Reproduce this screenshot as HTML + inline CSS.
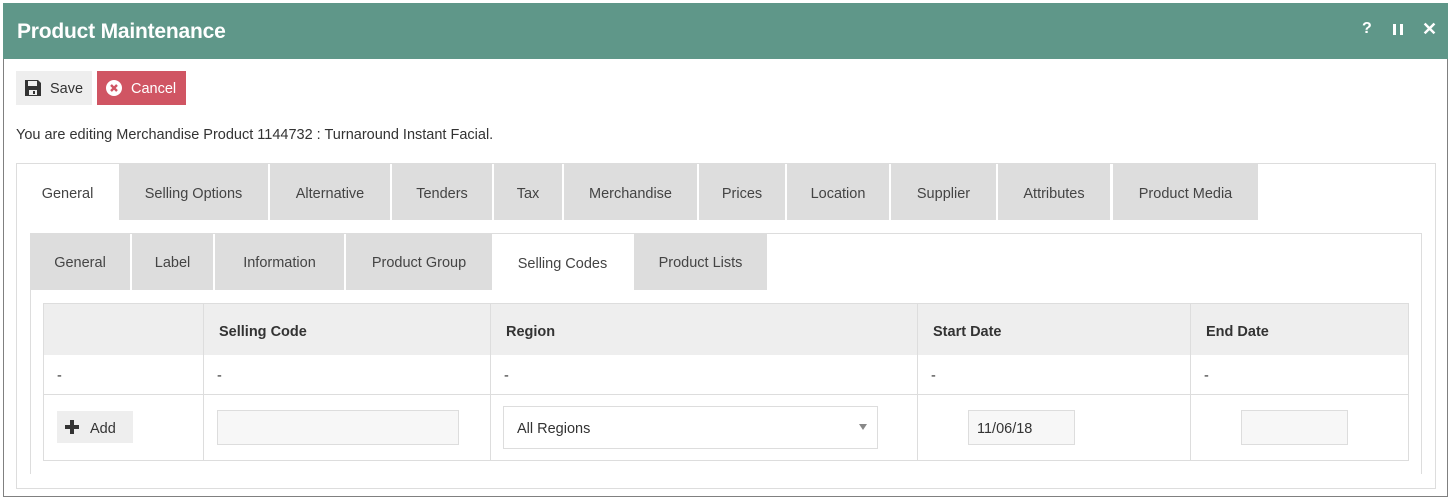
<!DOCTYPE html>
<html><head><meta charset="utf-8"><style>
*{box-sizing:border-box;margin:0;padding:0}
body{width:1452px;height:501px;background:#fff;font-family:"Liberation Sans",sans-serif;font-size:14.5px;color:#333;position:relative;overflow:hidden}
.a{position:absolute}
.t{transform:translateY(2px)}
.tab{position:absolute;background:#dddddd;display:flex;align-items:center;justify-content:center;color:#444;padding-top:3px}
.tab.on{background:#fff}
.bl{background:#ddd}
.inp{position:absolute;background:#f7f7f7;border:1px solid #ddd}
</style></head><body>
<div class="a" style="left:3px;top:3px;width:1445px;height:494px;border:1px solid #808080;border-top:none"></div>
<div class="a" style="left:3px;top:3px;width:1445px;height:56px;background:#5f9789"></div>
<div class="a" style="left:17px;top:20px;color:#fff;font-size:21px;font-weight:bold;letter-spacing:-0.2px">Product Maintenance</div>
<div class="a" style="left:1362px;top:20px;color:#fff;font-weight:bold;font-size:16px">?</div>
<div class="a" style="left:1393px;top:24px;width:3px;height:11px;background:#fff"></div>
<div class="a" style="left:1400px;top:24px;width:3px;height:11px;background:#fff"></div>
<div class="a" style="left:1422px;top:19px;color:#fff;font-weight:bold;font-size:18px">✕</div>

<div class="a" style="left:16px;top:71px;width:76px;height:34px;background:#eee"></div>
<svg class="a" style="left:24px;top:79px" width="18" height="18" viewBox="0 0 18 18"><path d="M1 1h13l3 3v13H1z" fill="#333"/><rect x="4" y="2" width="9" height="5" fill="#eee"/><rect x="5" y="11" width="8" height="5" fill="#eee"/><rect x="9" y="12" width="2" height="3" fill="#333"/></svg>
<div class="a t" style="left:50px;top:79px">Save</div>
<div class="a" style="left:97px;top:71px;width:89px;height:34px;background:#d05563"></div>
<svg class="a" style="left:105px;top:79px" width="18" height="18" viewBox="0 0 18 18"><circle cx="9" cy="9" r="8" fill="#fff"/><path d="M6 6l6 6M12 6l-6 6" stroke="#d05563" stroke-width="2.4"/></svg>
<div class="a t" style="left:131px;top:79px;color:#fff">Cancel</div>

<div class="a t" style="left:16px;top:125px">You are editing Merchandise Product 1144732 : Turnaround Instant Facial.</div>

<div class="a" style="left:16px;top:163px;width:1420px;height:326px;border:1px solid #ddd"></div>
<div class="tab on" style="left:17px;top:164px;width:101px;height:56px">General</div>
<div class="tab" style="left:119px;top:164px;width:149px;height:56px">Selling Options</div>
<div class="tab" style="left:270px;top:164px;width:120px;height:56px">Alternative</div>
<div class="tab" style="left:392px;top:164px;width:100px;height:56px">Tenders</div>
<div class="tab" style="left:494px;top:164px;width:68px;height:56px">Tax</div>
<div class="tab" style="left:564px;top:164px;width:133px;height:56px">Merchandise</div>
<div class="tab" style="left:699px;top:164px;width:86px;height:56px">Prices</div>
<div class="tab" style="left:787px;top:164px;width:102px;height:56px">Location</div>
<div class="tab" style="left:891px;top:164px;width:105px;height:56px">Supplier</div>
<div class="tab" style="left:998px;top:164px;width:112px;height:56px">Attributes</div>
<div class="tab" style="left:1113px;top:164px;width:145px;height:56px">Product Media</div>

<div class="a" style="left:30px;top:233px;width:1392px;height:241px;border:1px solid #ddd;border-bottom:none"></div>
<div class="tab" style="left:30px;top:233px;width:100px;height:57px">General</div>
<div class="tab" style="left:132px;top:233px;width:81px;height:57px">Label</div>
<div class="tab" style="left:215px;top:233px;width:129px;height:57px">Information</div>
<div class="tab" style="left:346px;top:233px;width:146px;height:57px">Product Group</div>
<div class="tab on" style="left:493px;top:234px;width:139px;height:56px">Selling Codes</div>
<div class="tab" style="left:634px;top:233px;width:133px;height:57px">Product Lists</div>

<div class="a" style="left:43px;top:303px;width:1366px;height:158px;border:1px solid #ddd"></div>
<div class="a" style="left:44px;top:304px;width:1364px;height:51px;background:#eee"></div>
<div class="a bl" style="left:44px;top:394px;width:1364px;height:1px"></div>
<div class="a bl" style="left:203px;top:304px;width:1px;height:156px"></div>
<div class="a bl" style="left:490px;top:304px;width:1px;height:156px"></div>
<div class="a bl" style="left:917px;top:304px;width:1px;height:156px"></div>
<div class="a bl" style="left:1190px;top:304px;width:1px;height:156px"></div>
<div class="a t" style="left:219px;top:322px;font-weight:bold">Selling Code</div>
<div class="a t" style="left:506px;top:322px;font-weight:bold">Region</div>
<div class="a t" style="left:933px;top:322px;font-weight:bold">Start Date</div>
<div class="a t" style="left:1206px;top:322px;font-weight:bold">End Date</div>
<div class="a t" style="left:57px;top:366px">-</div>
<div class="a t" style="left:217px;top:366px">-</div>
<div class="a t" style="left:504px;top:366px">-</div>
<div class="a t" style="left:931px;top:366px">-</div>
<div class="a t" style="left:1204px;top:366px">-</div>

<div class="a" style="left:57px;top:411px;width:76px;height:32px;background:#eee"></div>
<svg class="a" style="left:64px;top:419px" width="16" height="16" viewBox="0 0 16 16"><path d="M6 1h4v5h5v4h-5v5H6v-5H1V6h5z" fill="#333"/></svg>
<div class="a t" style="left:90px;top:419px">Add</div>
<div class="inp" style="left:217px;top:410px;width:242px;height:35px"></div>
<div class="a" style="left:503px;top:406px;width:375px;height:43px;border:1px solid #ddd;background:#fff"></div>
<div class="a t" style="left:517px;top:419px">All Regions</div>
<div class="a" style="left:859px;top:424px;width:0;height:0;border-left:4.5px solid transparent;border-right:4.5px solid transparent;border-top:6px solid #888"></div>
<div class="inp" style="left:968px;top:410px;width:107px;height:35px"></div>
<div class="a t" style="left:977px;top:419px">11/06/18</div>
<div class="inp" style="left:1241px;top:410px;width:107px;height:35px"></div>
</body></html>
